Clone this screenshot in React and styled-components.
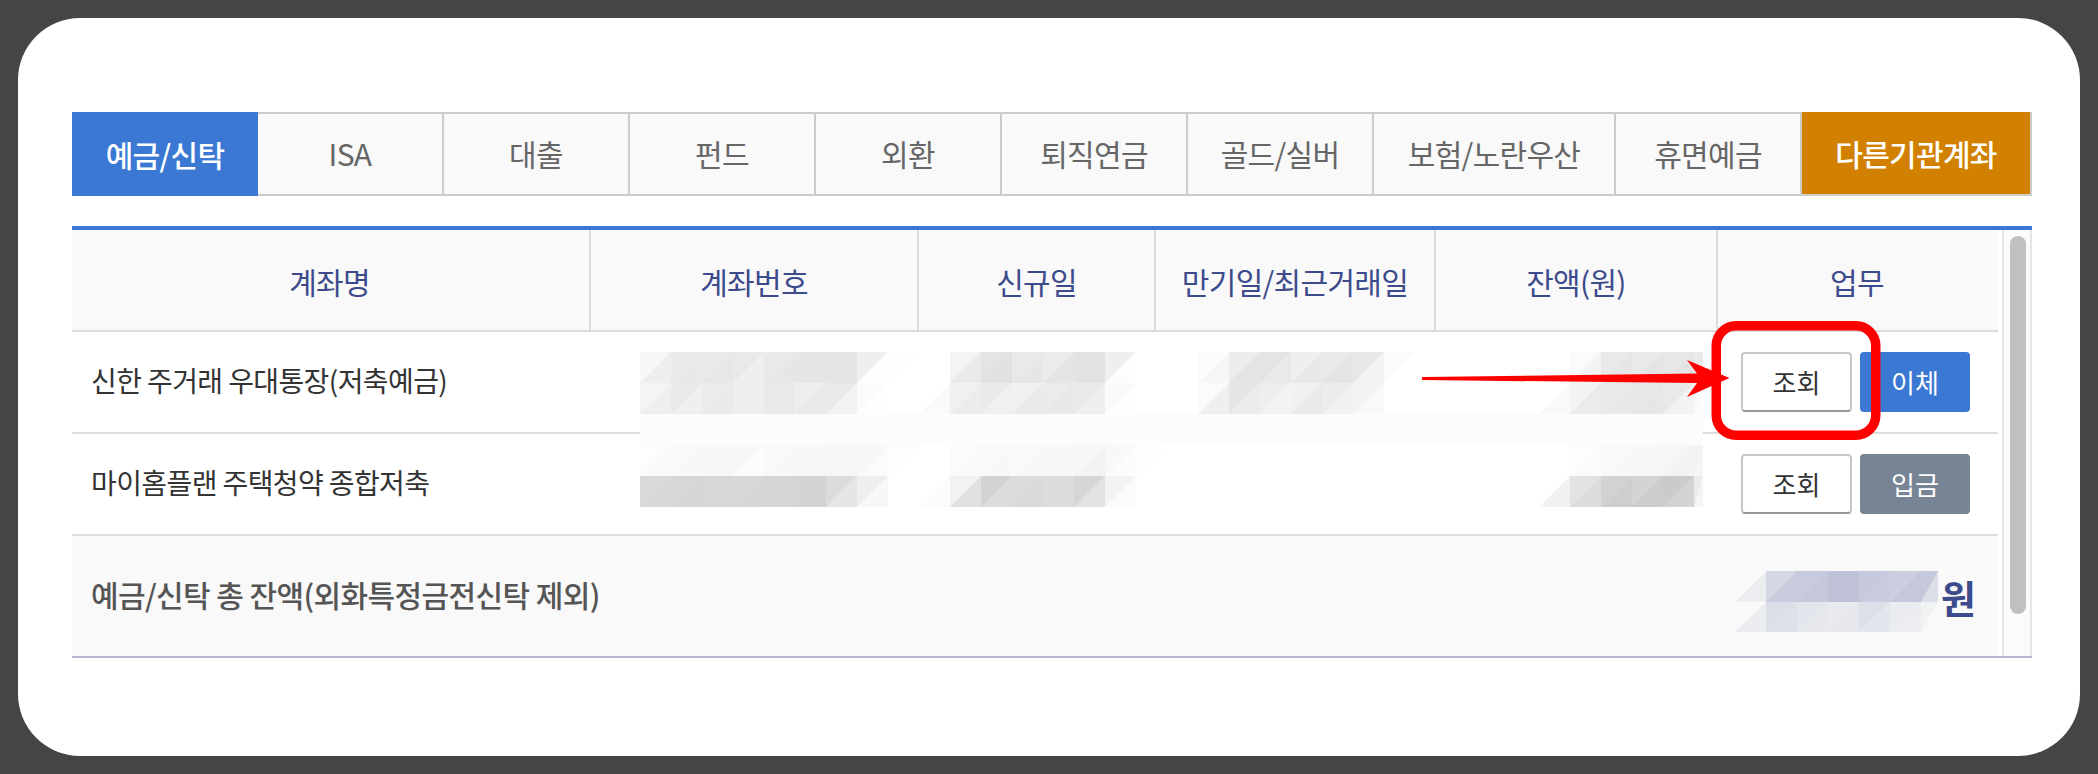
import React from "react";
import styled, { createGlobalStyle } from "styled-components";

const FONT = `"Noto Sans CJK KR", "Noto Sans", sans-serif`;
const BLUE = "#3a78d4";
const NAVY = "#3d4b8c";
const LINE = "#dcdcdc";
const PANEL = "#f9f9f9";

const Global = createGlobalStyle`
  html, body { margin: 0; padding: 0; background: #454545; overflow: hidden; }
  body { font-family: ${FONT}; }
  * { box-sizing: border-box; }
`;

const Card = styled.main`
  position: relative;
  width: 2062px;
  height: 738px;
  margin: 18px;
  padding: 94px 48px 0 54px;
  background: #fff;
  border-radius: 62px;
`;

const Tabs = styled.nav`
  display: flex;
  height: 84px;
`;

const Tab = styled.div`
  display: flex;
  align-items: center;
  justify-content: center;
  width: ${(p) => p.$w}px;
  padding-bottom: 2px;
  font-size: 30px;
  letter-spacing: -0.7px;
  color: #666;
  background: ${PANEL};
  border-top: 2px solid #ccc;
  border-bottom: 2px solid #ccc;
  border-right: 2px solid #ccc;
  ${(p) => p.$kind === "active" && `
    color: #fff; font-weight: 500; background: ${BLUE}; border: 0; padding-bottom: 0;
  `}
  ${(p) => p.$kind === "other" && `
    color: #fff; font-weight: 500; background: #d18000; border-top: 0; padding-top: 0; padding-bottom: 0;
  `}
`;

const TableFrame = styled.section`
  display: flex;
  height: 432px;
  margin-top: 30px;
  border-top: 4px solid ${BLUE};
  border-bottom: 2px solid #b5b8d0;
`;

const TableMain = styled.div`
  width: 1926px;
  display: flex;
  flex-direction: column;
`;

const COLS = "519px 328px 237px 280px 282px 280px";

const HeadRow = styled.div`
  display: grid;
  grid-template-columns: ${COLS};
  height: 102px;
  background: ${PANEL};
  border-bottom: 2px solid ${LINE};
`;

const HeadCell = styled.div`
  display: flex;
  align-items: center;
  justify-content: center;
  padding-top: 1px;
  font-size: 30px;
  letter-spacing: -0.7px;
  color: ${NAVY};
  border-right: 2px solid ${LINE};
  &:first-child { padding-right: 2px; }
  &:last-child { border-right: 0; padding-right: 2px; }
`;

const Row = styled.div`
  display: grid;
  grid-template-columns: ${COLS};
  height: 102px;
  border-bottom: 2px solid ${LINE};
`;

const NameCell = styled.div`
  display: flex;
  align-items: center;
  padding: 0 0 4px 19px;
  font-size: 28px;
  letter-spacing: -0.6px;
  color: #333;
`;

const EmptyCell = styled.div``;

const Actions = styled.div`
  display: flex;
  align-items: center;
  gap: 8px;
  padding-left: 23px;
`;

const Button = styled.button`
  width: ${(p) => (p.$tone ? 110 : 111)}px;
  height: 60px;
  padding: 0 0 2px;
  font-family: ${FONT};
  font-size: 26px;
  border-radius: 4px;
  color: ${(p) => (p.$tone ? "#fff" : "#333")};
  background: ${(p) => p.$tone || "#fff"};
  border: ${(p) => (p.$tone ? "0" : "2px solid #c8c8c8")};
  border-bottom-color: ${(p) => (p.$tone ? "transparent" : "#999")};
`;

const TotalRow = styled.div`
  flex: 1;
  display: flex;
  align-items: center;
  justify-content: space-between;
  padding: 0 23px 0 19px;
  background: ${PANEL};
`;

const TotalLabel = styled.div`
  font-size: 30px;
  font-weight: 500;
  letter-spacing: -0.6px;
  color: #555;
  padding-bottom: 4px;
`;

const TotalUnit = styled.div`
  font-size: 38px;
  font-weight: 700;
  letter-spacing: -1px;
  color: ${NAVY};
`;

const ScrollTrack = styled.div`
  width: 30px;
  margin-left: 4px;
  padding: 6px 0 0 6px;
  background: #fbfbfb;
  border-left: 2px solid #e6e6e6;
  border-right: 2px solid #e6e6e6;
`;

const ScrollThumb = styled.div`
  width: 16px;
  height: 378px;
  border-radius: 8px;
  background: #c0c0c0;
`;

const Overlay = styled.svg`
  position: absolute;
  left: 0;
  top: 0;
  pointer-events: none;
`;

const hex = (v) => `rgb(${v},${v},${v})`;
const tint = (v) =>
  `rgb(${v},${Math.min(249, v + 2)},${Math.round(v + (249 - v) * 0.42)})`;

const g = (s) => parseInt(s, 16);
const main = [
  {
    y: 352,
    cells: [
      [0, "f7", "ee"], [1, "ea", "e8"], [2, "ea", "e7"], [3, "e9", "ef"], [4, "e9", "e6"],
      [5, "e6", "e6"], [6, "e4", "e4"], [7, "ef", "fd"], [8, "fd", "ff"],
      [10, "f4", "ea"], [11, "e4", "e1"], [12, "e9", "e6"], [13, "eb", "e5"], [14, "e3", "e2"], [15, "ef", "fd"],
      [18, "fc", "f7"], [19, "ec", "e5"], [20, "e4", "e9"], [21, "ef", "e8"], [22, "e9", "e5"], [23, "e8", "f2"], [24, "fb", "ff"],
      [30, "fb", "f3"], [31, "e9", "e6"], [32, "e9", "e4"], [33, "e7", "e4"], [34, "ea", "ea", 9],
    ],
  },
  {
    y: 383,
    cells: [
      [0, "f4", "ef"], [1, "ea", "ef"], [2, "ec", "e9"], [3, "ee", "ee"], [4, "e9", "e9"],
      [5, "ee", "e9"], [6, "e9", "f2"], [7, "fb", "fe"], [9, "ff", "fa"],
      [10, "f1", "ec"], [11, "ea", "f0"], [12, "f1", "ea"], [13, "eb", "e8"], [14, "e9", "ef"], [15, "fa", "fe"],
      [18, "fc", "ef"], [19, "e6", "ec"], [20, "ee", "f3"], [21, "f1", "e9"], [22, "ec", "f1"], [23, "f2", "f9"],
      [29, "ff", "f9"], [30, "f3", "eb"], [31, "e9", "e8"], [32, "e8", "e6"], [33, "ea", "f3"], [34, "f6", "fc", 9],
    ],
  },
  {
    y: 445,
    cells: [
      [0, "fd", "f9"], [1, "f9", "f8"], [2, "f8", "f7"], [3, "f8", "fc"], [4, "f9", "f8"],
      [5, "f8", "f7"], [6, "f7", "f6"], [7, "f7", "fb"], [8, "fd", "ff"],
      [10, "fb", "f9"], [11, "f9", "f8"], [12, "f9", "f8"], [13, "f8", "f8"], [14, "f7", "f3"], [15, "f8", "fc"], [16, "fe", "ff"],
      [30, "fd", "fb"], [31, "f9", "f8"], [32, "f8", "f6"], [33, "f6", "f3"], [34, "f2", "f6", 9],
    ],
  },
  {
    y: 476,
    cells: [
      [0, "d9", "d8"], [1, "d7", "d6"], [2, "d7", "d7"], [3, "d8", "d6"], [4, "d6", "d5"],
      [5, "d4", "d4"], [6, "dc", "e6"], [7, "ee", "f8"], [9, "ff", "fc"],
      [10, "f2", "e0"], [11, "d3", "dc"], [12, "dc", "da"], [13, "dc", "dc"], [14, "d6", "e2"], [15, "f3", "fb"],
      [29, "ff", "f1"], [30, "e3", "dc"], [31, "d3", "ce"], [32, "d4", "cd"], [33, "cb", "d4"], [34, "ec", "f5", 9],
    ],
  },
];

const total = [
  {
    y: 571,
    cells: [
      [0, "f9", "eb"], [1, "d5", "c9"], [2, "c8", "c5"], [3, "bf", "bf"], [4, "c7", "ca"], [5, "cc", "c5"], [6, "c6", "dc", 17],
    ],
  },
  {
    y: 602,
    cells: [
      [0, "f8", "ea"], [1, "dc", "dd"], [2, "e3", "e6"], [3, "e8", "e6"], [4, "dd", "e4"], [5, "ea", "eb"], [6, "f0", "f8", 17],
    ],
  },
];

function Cell({ x, y, w = 31, h = 31, a, b }) {
  return (
    <>
      <rect x={x} y={y} width={w} height={h} fill={b} />
      <polygon points={`${x},${y} ${x + w},${y} ${x},${y + h}`} fill={a} />
    </>
  );
}

function Censor() {
  return (
    <Overlay width="2062" height="738" viewBox="18 18 2062 738">
      <rect x="640" y="414" width="1063" height="31" fill="#fcfcfc" />
      {main.flatMap((r) =>
        r.cells.map(([n, a, b, w]) => (
          <Cell key={`${r.y}-${n}`} x={640 + 31 * n} y={r.y} w={w || 31} a={hex(g(a))} b={hex(g(b))} />
        ))
      )}
      {total.flatMap((r) =>
        r.cells.map(([n, a, b, w]) => (
          <Cell key={`${r.y}-${n}`} x={1735 + 31 * n} y={r.y} w={w || 31} h={r.y === 602 ? 30 : 31} a={tint(g(a))} b={tint(g(b))} />
        ))
      )}
      <polygon
        points="1422,377 1697,373.5 1687,360 1729.5,378 1687,397 1697,383 1422,380"
        fill="#ff0000"
      />
      <rect x="1716.25" y="325.75" width="159.5" height="109.5" rx="20" fill="none" stroke="#ff0000" strokeWidth="9.5" />
    </Overlay>
  );
}

const tabs = [
  ["예금/신탁", 186, "active"],
  ["ISA", 186],
  ["대출", 186],
  ["펀드", 186],
  ["외환", 186],
  ["퇴직연금", 186],
  ["골드/실버", 186],
  ["보험/노란우산", 242],
  ["휴면예금", 186],
  ["다른기관계좌", 230, "other"],
];

const heads = ["계좌명", "계좌번호", "신규일", "만기일/최근거래일", "잔액(원)", "업무"];

const rows = [
  { name: "신한 주거래 우대통장(저축예금)", action: "이체", tone: BLUE },
  { name: "마이홈플랜 주택청약 종합저축", action: "입금", tone: "#778494" },
];

export default function App() {
  return (
    <>
      <Global />
      <Card>
        <Tabs>
          {tabs.map(([label, w, kind]) => (
            <Tab key={label} $w={w} $kind={kind}>{label}</Tab>
          ))}
        </Tabs>
        <TableFrame>
          <TableMain>
            <HeadRow>
              {heads.map((h) => <HeadCell key={h}>{h}</HeadCell>)}
            </HeadRow>
            {rows.map((r) => (
              <Row key={r.name}>
                <NameCell>{r.name}</NameCell>
                <EmptyCell />
                <EmptyCell />
                <EmptyCell />
                <EmptyCell />
                <Actions>
                  <Button>조회</Button>
                  <Button $tone={r.tone}>{r.action}</Button>
                </Actions>
              </Row>
            ))}
            <TotalRow>
              <TotalLabel>예금/신탁 총 잔액(외화특정금전신탁 제외)</TotalLabel>
              <TotalUnit>원</TotalUnit>
            </TotalRow>
          </TableMain>
          <ScrollTrack>
            <ScrollThumb />
          </ScrollTrack>
        </TableFrame>
        <Censor />
      </Card>
    </>
  );
}
